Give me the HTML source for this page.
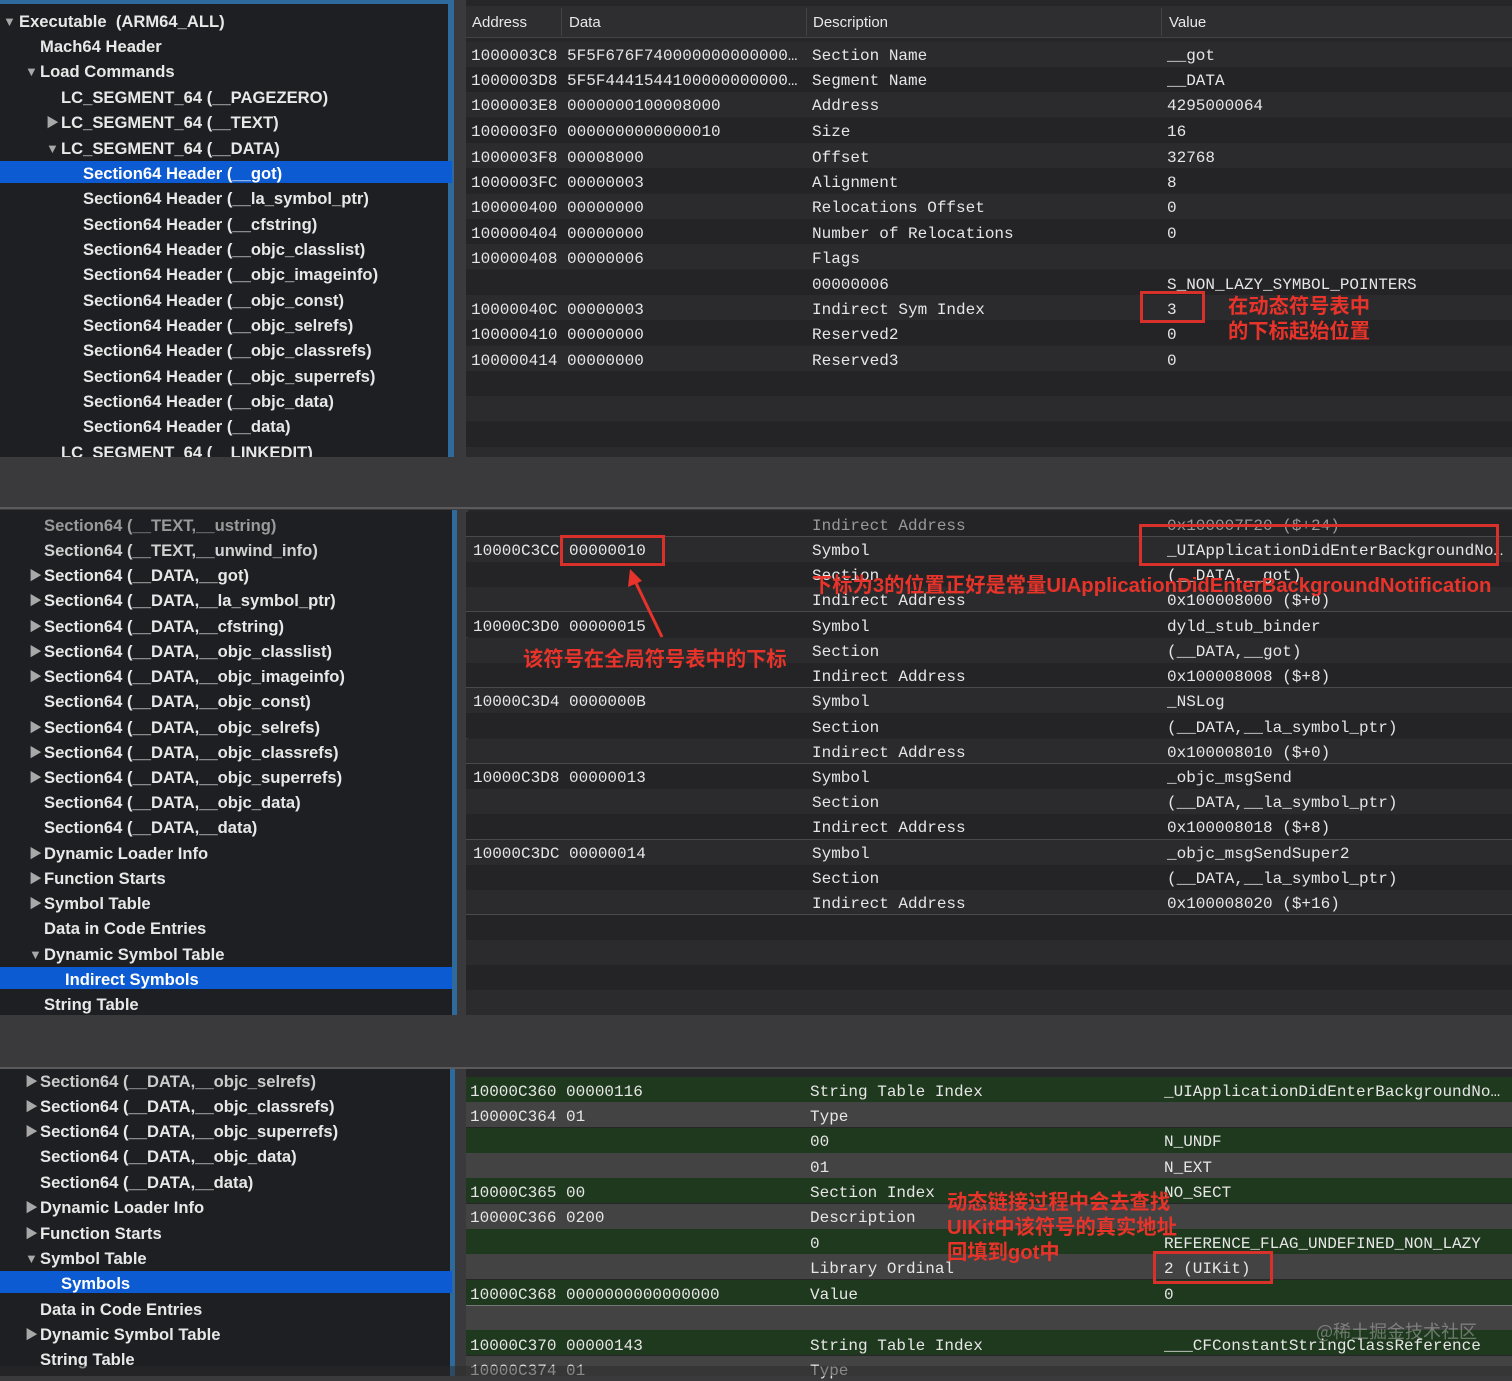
<!DOCTYPE html><html><head><meta charset="utf-8"><style>
body{margin:0;width:1512px;height:1376px;background:#3a3a3c;position:relative;overflow:hidden;font-family:"Liberation Sans","Noto Sans CJK SC",sans-serif}
div{position:absolute;box-sizing:border-box}
.side{background:#1e1f22;left:0;width:452px}
.tbl{background:#262628;left:466px;width:1046px}
.t{color:#e8e8e8;font-weight:bold;font-size:16.6px;line-height:20px;white-space:nowrap;margin-top:2px}
.dim{color:#9a9a9a}
.tri{color:#a8a8a8;font-size:13px;line-height:20px;margin-top:2px}
.m{color:#e6e6e6;font-family:"Liberation Mono",monospace;font-size:16px;line-height:20px;white-space:nowrap;margin-top:2px}
.sel{background:#0d5bd2;left:0;width:452px;height:22px}
.r{left:466px;width:1046px;height:25px}
.a{background:#2b2b2d}.b{background:#242426}
.g{background:#1f391e}.y{background:#424342}
.red{color:#e8332a;font-weight:bold;font-size:20.3px;line-height:24px;white-space:nowrap;font-family:"Liberation Sans","Noto Sans CJK SC",sans-serif;margin-top:1px}
.box{border:3px solid #d8302a}
.line{left:466px;width:1046px;height:1px;background:#4a4a4c}
</style></head><body>
<!-- PANEL 1 -->
<div class="side" style="top:0;height:457px"></div>
<div style="left:448px;top:0;width:6px;height:457px;background:#2f6a9c"></div>
<div style="left:0;top:0;width:454px;height:4px;background:#2f6a9c"></div>
<div class="tbl" style="top:0;height:457px"></div>
<div style="left:466px;top:6px;width:1046px;height:32px;background:#2e2e30;border-bottom:1px solid #444"></div>
<div class="t" style="left:472px;top:11px;font-weight:normal;font-size:15px">Address</div>
<div class="t" style="left:569px;top:11px;font-weight:normal;font-size:15px">Data</div>
<div class="t" style="left:813px;top:11px;font-weight:normal;font-size:15px">Description</div>
<div class="t" style="left:1169px;top:11px;font-weight:normal;font-size:15px">Value</div>
<div style="left:561px;top:8px;width:1px;height:28px;background:#444"></div>
<div style="left:806px;top:8px;width:1px;height:28px;background:#444"></div>
<div style="left:1161px;top:8px;width:1px;height:28px;background:#444"></div>
<div class="r a" style="top:42px"></div><div class="r b" style="top:67px"></div><div class="r a" style="top:92px"></div><div class="r b" style="top:118px"></div><div class="r a" style="top:143px"></div><div class="r b" style="top:168px"></div><div class="r a" style="top:194px"></div><div class="r b" style="top:219px"></div><div class="r a" style="top:244px"></div><div class="r b" style="top:270px"></div><div class="r a" style="top:295px"></div><div class="r b" style="top:320px"></div><div class="r a" style="top:346px"></div><div class="r b" style="top:371px"></div><div class="r a" style="top:396px"></div><div class="r b" style="top:422px"></div><div class="r a" style="top:447px;height:10px"></div>
<div class="sel" style="top:161px"></div>
<div class="tri" style="left:3px;top:10px">▼</div><div class="t" style="left:19px;top:10px">Executable&nbsp; (ARM64_ALL)</div>
<div class="t" style="left:40px;top:35px">Mach64 Header</div>
<div class="tri" style="left:25px;top:60px">▼</div><div class="t" style="left:40px;top:60px">Load Commands</div>
<div class="t" style="left:61px;top:86px">LC_SEGMENT_64 (__PAGEZERO)</div>
<div class="tri" style="left:46px;top:111px">▶</div><div class="t" style="left:61px;top:111px">LC_SEGMENT_64 (__TEXT)</div>
<div class="tri" style="left:46px;top:137px">▼</div><div class="t" style="left:61px;top:137px">LC_SEGMENT_64 (__DATA)</div>
<div class="t" style="left:83px;top:162px;color:#fff">Section64 Header (__got)</div>
<div class="t" style="left:83px;top:187px">Section64 Header (__la_symbol_ptr)</div>
<div class="t" style="left:83px;top:213px">Section64 Header (__cfstring)</div>
<div class="t" style="left:83px;top:238px">Section64 Header (__objc_classlist)</div>
<div class="t" style="left:83px;top:263px">Section64 Header (__objc_imageinfo)</div>
<div class="t" style="left:83px;top:289px">Section64 Header (__objc_const)</div>
<div class="t" style="left:83px;top:314px">Section64 Header (__objc_selrefs)</div>
<div class="t" style="left:83px;top:339px">Section64 Header (__objc_classrefs)</div>
<div class="t" style="left:83px;top:365px">Section64 Header (__objc_superrefs)</div>
<div class="t" style="left:83px;top:390px">Section64 Header (__objc_data)</div>
<div class="t" style="left:83px;top:415px">Section64 Header (__data)</div>
<div style="left:0;top:441px;width:448px;height:16px;overflow:hidden"><div class="t" style="left:61px;top:0">LC_SEGMENT_64 (__LINKEDIT)</div></div>
<div class="m" style="left:471px;top:44px">1000003C8 5F5F676F740000000000000…</div><div class="m" style="left:812px;top:44px">Section Name</div><div class="m" style="left:1167px;top:44px">__got</div>
<div class="m" style="left:471px;top:69px">1000003D8 5F5F4441544100000000000…</div><div class="m" style="left:812px;top:69px">Segment Name</div><div class="m" style="left:1167px;top:69px">__DATA</div>
<div class="m" style="left:471px;top:94px">1000003E8 0000000100008000</div><div class="m" style="left:812px;top:94px">Address</div><div class="m" style="left:1167px;top:94px">4295000064</div>
<div class="m" style="left:471px;top:120px">1000003F0 0000000000000010</div><div class="m" style="left:812px;top:120px">Size</div><div class="m" style="left:1167px;top:120px">16</div>
<div class="m" style="left:471px;top:146px">1000003F8 00008000</div><div class="m" style="left:812px;top:146px">Offset</div><div class="m" style="left:1167px;top:146px">32768</div>
<div class="m" style="left:471px;top:171px">1000003FC 00000003</div><div class="m" style="left:812px;top:171px">Alignment</div><div class="m" style="left:1167px;top:171px">8</div>
<div class="m" style="left:471px;top:196px">100000400 00000000</div><div class="m" style="left:812px;top:196px">Relocations Offset</div><div class="m" style="left:1167px;top:196px">0</div>
<div class="m" style="left:471px;top:222px">100000404 00000000</div><div class="m" style="left:812px;top:222px">Number of Relocations</div><div class="m" style="left:1167px;top:222px">0</div>
<div class="m" style="left:471px;top:247px">100000408 00000006</div><div class="m" style="left:812px;top:247px">Flags</div>
<div class="m" style="left:812px;top:273px">00000006</div><div class="m" style="left:1167px;top:273px">S_NON_LAZY_SYMBOL_POINTERS</div>
<div class="m" style="left:471px;top:298px">10000040C 00000003</div><div class="m" style="left:812px;top:298px">Indirect Sym Index</div><div class="m" style="left:1167px;top:298px">3</div>
<div class="m" style="left:471px;top:323px">100000410 00000000</div><div class="m" style="left:812px;top:323px">Reserved2</div><div class="m" style="left:1167px;top:323px">0</div>
<div class="m" style="left:471px;top:349px">100000414 00000000</div><div class="m" style="left:812px;top:349px">Reserved3</div><div class="m" style="left:1167px;top:349px">0</div>
<div class="box" style="left:1140px;top:291px;width:65px;height:32px"></div>
<div class="red" style="left:1228px;top:294px">在动态符号表中</div>
<div class="red" style="left:1228px;top:319px">的下标起始位置</div>
<!-- gap -->
<div style="left:0;top:507px;width:1512px;height:2px;background:#5a5a5c"></div>
<!-- PANEL 2 -->
<div class="side" style="top:510px;height:505px"></div>
<div style="left:452px;top:510px;width:5px;height:505px;background:#2f6a9c"></div>
<div class="tbl" style="top:510px;height:505px;left:468px"></div>
<div class="r b" style="top:512px"></div><div class="r a" style="top:537px"></div><div class="r b" style="top:562px"></div><div class="r a" style="top:587px"></div><div class="r b" style="top:612px"></div><div class="r a" style="top:638px"></div><div class="r b" style="top:663px"></div><div class="r a" style="top:688px"></div><div class="r b" style="top:713px"></div><div class="r a" style="top:739px"></div><div class="r b" style="top:764px"></div><div class="r a" style="top:789px"></div><div class="r b" style="top:814px"></div><div class="r a" style="top:840px"></div><div class="r b" style="top:865px"></div><div class="r a" style="top:890px"></div><div class="r b" style="top:915px"></div><div class="r a" style="top:940px"></div><div class="r b" style="top:965px"></div><div class="r a" style="top:990px;height:25px"></div>
<div class="line" style="top:536px"></div><div class="line" style="top:611px"></div><div class="line" style="top:687px"></div><div class="line" style="top:763px"></div><div class="line" style="top:839px"></div><div class="line" style="top:914px"></div>
<div class="sel" style="top:967px"></div>
<div class="t dim" style="left:44px;top:514px">Section64 (__TEXT,__ustring)</div>
<div class="t" style="left:44px;top:539px;color:#d0d0d0">Section64 (__TEXT,__unwind_info)</div>
<div class="tri" style="left:29px;top:564px">▶</div><div class="t" style="left:44px;top:564px">Section64 (__DATA,__got)</div>
<div class="tri" style="left:29px;top:589px">▶</div><div class="t" style="left:44px;top:589px">Section64 (__DATA,__la_symbol_ptr)</div>
<div class="tri" style="left:29px;top:615px">▶</div><div class="t" style="left:44px;top:615px">Section64 (__DATA,__cfstring)</div>
<div class="tri" style="left:29px;top:640px">▶</div><div class="t" style="left:44px;top:640px">Section64 (__DATA,__objc_classlist)</div>
<div class="tri" style="left:29px;top:665px">▶</div><div class="t" style="left:44px;top:665px">Section64 (__DATA,__objc_imageinfo)</div>
<div class="t" style="left:44px;top:690px">Section64 (__DATA,__objc_const)</div>
<div class="tri" style="left:29px;top:716px">▶</div><div class="t" style="left:44px;top:716px">Section64 (__DATA,__objc_selrefs)</div>
<div class="tri" style="left:29px;top:741px">▶</div><div class="t" style="left:44px;top:741px">Section64 (__DATA,__objc_classrefs)</div>
<div class="tri" style="left:29px;top:766px">▶</div><div class="t" style="left:44px;top:766px">Section64 (__DATA,__objc_superrefs)</div>
<div class="t" style="left:44px;top:791px">Section64 (__DATA,__objc_data)</div>
<div class="t" style="left:44px;top:816px">Section64 (__DATA,__data)</div>
<div class="tri" style="left:29px;top:842px">▶</div><div class="t" style="left:44px;top:842px">Dynamic Loader Info</div>
<div class="tri" style="left:29px;top:867px">▶</div><div class="t" style="left:44px;top:867px">Function Starts</div>
<div class="tri" style="left:29px;top:892px">▶</div><div class="t" style="left:44px;top:892px">Symbol Table</div>
<div class="t" style="left:44px;top:917px">Data in Code Entries</div>
<div class="tri" style="left:29px;top:943px">▼</div><div class="t" style="left:44px;top:943px">Dynamic Symbol Table</div>
<div class="t" style="left:65px;top:968px;color:#fff">Indirect Symbols</div>
<div class="t" style="left:44px;top:993px">String Table</div>
<div class="m" style="left:812px;top:514px;color:#999">Indirect Address</div><div class="m" style="left:1167px;top:514px;color:#999">0x100007F20 ($+24)</div>
<div class="m" style="left:473px;top:539px">10000C3CC 00000010</div><div class="m" style="left:812px;top:539px">Symbol</div><div class="m" style="left:1167px;top:539px">_UIApplicationDidEnterBackgroundNo…</div>
<div class="m" style="left:812px;top:564px">Section</div><div class="m" style="left:1167px;top:564px">(__DATA,__got)</div>
<div class="m" style="left:812px;top:589px">Indirect Address</div><div class="m" style="left:1167px;top:589px">0x100008000 ($+0)</div>
<div class="m" style="left:473px;top:615px">10000C3D0 00000015</div><div class="m" style="left:812px;top:615px">Symbol</div><div class="m" style="left:1167px;top:615px">dyld_stub_binder</div>
<div class="m" style="left:812px;top:640px">Section</div><div class="m" style="left:1167px;top:640px">(__DATA,__got)</div>
<div class="m" style="left:812px;top:665px">Indirect Address</div><div class="m" style="left:1167px;top:665px">0x100008008 ($+8)</div>
<div class="m" style="left:473px;top:690px">10000C3D4 0000000B</div><div class="m" style="left:812px;top:690px">Symbol</div><div class="m" style="left:1167px;top:690px">_NSLog</div>
<div class="m" style="left:812px;top:716px">Section</div><div class="m" style="left:1167px;top:716px">(__DATA,__la_symbol_ptr)</div>
<div class="m" style="left:812px;top:741px">Indirect Address</div><div class="m" style="left:1167px;top:741px">0x100008010 ($+0)</div>
<div class="m" style="left:473px;top:766px">10000C3D8 00000013</div><div class="m" style="left:812px;top:766px">Symbol</div><div class="m" style="left:1167px;top:766px">_objc_msgSend</div>
<div class="m" style="left:812px;top:791px">Section</div><div class="m" style="left:1167px;top:791px">(__DATA,__la_symbol_ptr)</div>
<div class="m" style="left:812px;top:816px">Indirect Address</div><div class="m" style="left:1167px;top:816px">0x100008018 ($+8)</div>
<div class="m" style="left:473px;top:842px">10000C3DC 00000014</div><div class="m" style="left:812px;top:842px">Symbol</div><div class="m" style="left:1167px;top:842px">_objc_msgSendSuper2</div>
<div class="m" style="left:812px;top:867px">Section</div><div class="m" style="left:1167px;top:867px">(__DATA,__la_symbol_ptr)</div>
<div class="m" style="left:812px;top:892px">Indirect Address</div><div class="m" style="left:1167px;top:892px">0x100008020 ($+16)</div>
<div class="box" style="left:560px;top:535px;width:105px;height:31px"></div>
<div class="box" style="left:1139px;top:524px;width:360px;height:42px"></div>
<div class="red" style="left:812px;top:573px">下标为3的位置正好是常量UIApplicationDidEnterBackgroundNotification</div>
<svg style="position:absolute;left:620px;top:565px" width="60" height="80"><line x1="42" y1="72" x2="14" y2="14" stroke="#e8332a" stroke-width="3"/><polygon points="10,4 8,22 22,16" fill="#e8332a"/></svg>
<div class="red" style="left:523px;top:647px">该符号在全局符号表中的下标</div>
<!-- gap -->
<div style="left:0;top:1067px;width:1512px;height:2px;background:#5a5a5c"></div>
<!-- PANEL 3 -->
<div class="side" style="top:1069px;height:307px"></div>
<div style="left:450px;top:1069px;width:5px;height:307px;background:#2f6a9c"></div>
<div class="tbl" style="top:1069px;height:307px"></div>
<div class="r g" style="top:1077px"></div><div class="r y" style="top:1102px"></div><div class="r g" style="top:1128px"></div><div class="r y" style="top:1153px"></div><div class="r g" style="top:1178px"></div><div class="r y" style="top:1204px"></div><div class="r g" style="top:1229px"></div><div class="r y" style="top:1254px"></div><div class="r g" style="top:1280px"></div><div class="r y" style="top:1305px"></div><div class="r g" style="top:1330px"></div><div class="r y" style="top:1356px;height:20px"></div>
<div class="line" style="top:1305px;background:#777"></div>
<div class="sel" style="top:1271px"></div>
<div class="tri" style="left:25px;top:1070px">▶</div><div class="t" style="left:40px;top:1070px;color:#ccc">Section64 (__DATA,__objc_selrefs)</div>
<div class="tri" style="left:25px;top:1095px">▶</div><div class="t" style="left:40px;top:1095px">Section64 (__DATA,__objc_classrefs)</div>
<div class="tri" style="left:25px;top:1120px">▶</div><div class="t" style="left:40px;top:1120px">Section64 (__DATA,__objc_superrefs)</div>
<div class="t" style="left:40px;top:1145px">Section64 (__DATA,__objc_data)</div>
<div class="t" style="left:40px;top:1171px">Section64 (__DATA,__data)</div>
<div class="tri" style="left:25px;top:1196px">▶</div><div class="t" style="left:40px;top:1196px">Dynamic Loader Info</div>
<div class="tri" style="left:25px;top:1222px">▶</div><div class="t" style="left:40px;top:1222px">Function Starts</div>
<div class="tri" style="left:25px;top:1247px">▼</div><div class="t" style="left:40px;top:1247px">Symbol Table</div>
<div class="t" style="left:61px;top:1272px;color:#fff">Symbols</div>
<div class="t" style="left:40px;top:1298px">Data in Code Entries</div>
<div class="tri" style="left:25px;top:1323px">▶</div><div class="t" style="left:40px;top:1323px">Dynamic Symbol Table</div>
<div class="t" style="left:40px;top:1348px">String Table</div>
<div class="m" style="left:470px;top:1080px">10000C360 00000116</div><div class="m" style="left:810px;top:1080px">String Table Index</div><div class="m" style="left:1164px;top:1080px">_UIApplicationDidEnterBackgroundNo…</div>
<div class="m" style="left:470px;top:1105px">10000C364 01</div><div class="m" style="left:810px;top:1105px">Type</div>
<div class="m" style="left:810px;top:1130px">00</div><div class="m" style="left:1164px;top:1130px">N_UNDF</div>
<div class="m" style="left:810px;top:1156px">01</div><div class="m" style="left:1164px;top:1156px">N_EXT</div>
<div class="m" style="left:470px;top:1181px">10000C365 00</div><div class="m" style="left:810px;top:1181px">Section Index</div><div class="m" style="left:1164px;top:1181px">NO_SECT</div>
<div class="m" style="left:470px;top:1206px">10000C366 0200</div><div class="m" style="left:810px;top:1206px">Description</div>
<div class="m" style="left:810px;top:1232px">0</div><div class="m" style="left:1164px;top:1232px">REFERENCE_FLAG_UNDEFINED_NON_LAZY</div>
<div class="m" style="left:810px;top:1257px">Library Ordinal</div><div class="m" style="left:1164px;top:1257px">2 (UIKit)</div>
<div class="m" style="left:470px;top:1283px">10000C368 0000000000000000</div><div class="m" style="left:810px;top:1283px">Value</div><div class="m" style="left:1164px;top:1283px">0</div>
<div class="m" style="left:470px;top:1334px">10000C370 00000143</div><div class="m" style="left:810px;top:1334px">String Table Index</div><div class="m" style="left:1164px;top:1334px">___CFConstantStringClassReference</div>
<div class="m" style="left:470px;top:1359px">10000C374 01</div><div class="m" style="left:810px;top:1359px">Type</div>
<div class="box" style="left:1153px;top:1251px;width:120px;height:33px"></div>
<div class="red" style="left:947px;top:1190px">动态链接过程中会去查找</div>
<div class="red" style="left:947px;top:1215px">UIKit中该符号的真实地址</div>
<div class="red" style="left:947px;top:1240px">回填到got中</div>
<div style="left:1316px;top:1318px;color:rgba(200,200,200,.45);font-size:18px;font-family:'Noto Sans CJK SC',sans-serif;white-space:nowrap">@稀土掘金技术社区</div>
<div style="left:0;top:1366px;width:1512px;height:10px;background:#2a2a2a;opacity:.5"></div>
</body></html>
